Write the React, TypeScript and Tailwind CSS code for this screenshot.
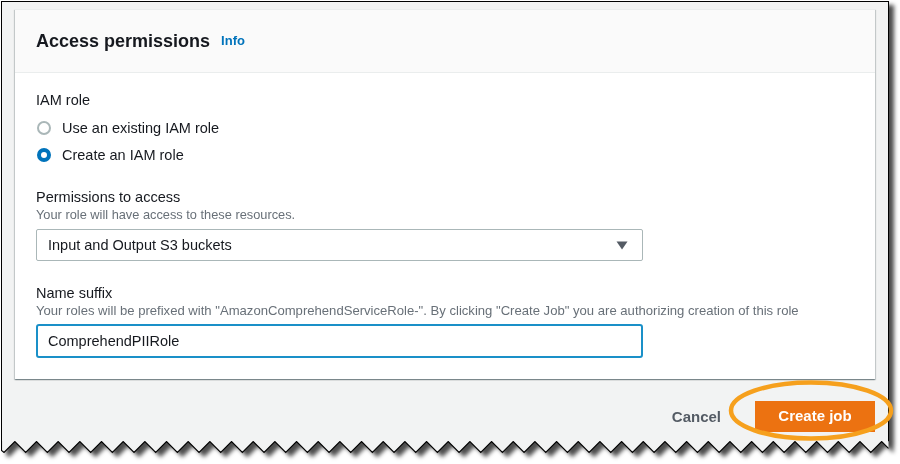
import React from "react";

function Teeth() {
  const W = 888;
  const period = 21.67;
  const half = period / 2;
  const top = 0.5;
  const bottom = 11.5;
  const pts: [number, number][] = [];
  pts.push([0.5, 0]);
  pts.push([0.5, bottom - 2]);
  let x = 3;
  let down = true;
  while (x < W - 0.5) {
    pts.push([x, down ? bottom : top]);
    x += half;
    down = !down;
  }
  const prev = pts[pts.length - 1];
  const frac = (W - 0.5 - prev[0]) / half;
  const yEnd = prev[1] + (down ? bottom - top : top - bottom) * frac;
  pts.push([W - 0.5, yEnd]);
  const line = pts.map((p, i) => `${i === 0 ? "M" : "L"}${p[0].toFixed(2)},${p[1].toFixed(2)}`).join(" ");
  const fill = `${line} L${W - 0.5},0 Z`;
  return (
    <svg width={W} height={13} className="block -mt-px" viewBox={`0 0 ${W} 13`}>
      <path d={fill} fill="#f2f3f3" />
      <path d={line} fill="none" stroke="#000" strokeWidth={1.1} />
    </svg>
  );
}

function Radio({ checked }: { checked?: boolean }) {
  return checked ? (
    <span className="block w-[14px] h-[14px] rounded-full border-[4px] border-[#0073bb] bg-white" />
  ) : (
    <span className="block w-[14px] h-[14px] rounded-full border-2 border-[#aab7b8] bg-white" />
  );
}

export default function App() {
  return (
    <div
      className="relative w-[900px] h-[464px] bg-white overflow-hidden text-[#16191f]"
      style={{ fontFamily: '"Liberation Sans", Arial, sans-serif' }}
    >
      <div className="ml-px mt-px w-[888px] [filter:drop-shadow(5px_4px_2px_rgba(0,0,0,0.7))]">
        <div className="h-[441px] bg-[#f2f3f3] border-l border-t border-r border-black pl-[13px] pt-[7px]">
          {/* Card */}
          <div className="w-[860px] h-[370px] bg-white shadow-[0_1px_1px_0_rgba(0,28,36,0.3),1px_1px_1px_0_rgba(0,28,36,0.15),-1px_1px_1px_0_rgba(0,28,36,0.15)] border-t border-[#eaeded]">
            <div className="h-[63px] bg-[#fafafa] border-b border-[#eaeded] flex items-center pl-[21px]">
              <span className="text-[18px] font-bold leading-[24px]">Access permissions</span>
              <span className="ml-[11px] text-[13px] font-bold text-[#0073bb] leading-[24px]">Info</span>
            </div>
            <div className="pl-[21px] pt-[17px]">
              <div className="text-[14.5px] leading-[20px]">IAM role</div>
              <div className="mt-[4px] h-[27px] flex items-center">
                <span className="ml-px">
                  <Radio />
                </span>
                <span className="ml-[11px] text-[14.5px] leading-[20px]">Use an existing IAM role</span>
              </div>
              <div className="h-[27px] flex items-center">
                <span className="ml-px">
                  <Radio checked />
                </span>
                <span className="ml-[11px] text-[14.5px] leading-[20px]">Create an IAM role</span>
              </div>

              <div className="mt-[19px] text-[14.5px] leading-[20px]">Permissions to access</div>
              <div className="text-[12.8px] leading-[16px] text-[#687078]">
                Your role will have access to these resources.
              </div>
              <div className="mt-[6px] w-[607px] h-[32px] border border-[#aab7b8] rounded-[2px] flex items-center justify-between pl-[11px] pr-[14px]">
                <span className="text-[14.5px] leading-[20px]">Input and Output S3 buckets</span>
                <svg width="12" height="9" viewBox="0 0 12 9">
                  <path d="M0.5 0.5 L11.5 0.5 L6 8.5 Z" fill="#545b64" />
                </svg>
              </div>

              <div className="mt-[22px] text-[14.5px] leading-[20px]">Name suffix</div>
              <div className="text-[13.1px] leading-[16px] text-[#687078]">
                Your roles will be prefixed with "AmazonComprehendServiceRole-". By clicking "Create Job" you are
                authorizing creation of this role
              </div>
              <div className="mt-[5px] w-[607px] h-[34px] border-2 border-[#1a90c8] rounded-[3px] flex items-center pl-[10px]">
                <span className="text-[14.5px] leading-[20px]">ComprehendPIIRole</span>
              </div>
            </div>
          </div>

          {/* Footer */}
          <div className="w-[860px] mt-[22px] h-[31px] flex items-center justify-end">
            <span className="mr-[34px] text-[15px] font-bold text-[#545b64] leading-[20px]">Cancel</span>
            <span className="w-[120px] h-[31px] bg-[#ec7211] flex items-center justify-center text-[15px] font-bold text-white">
              Create job
            </span>
          </div>
        </div>
        <Teeth />
      </div>

      {/* Highlight ellipse */}
      <svg className="absolute left-[728px] top-[380px]" width="168" height="62" viewBox="0 0 168 62">
        <ellipse cx="83" cy="30.5" rx="80" ry="28" fill="none" stroke="#f6a01d" strokeWidth="4.5" />
      </svg>
    </div>
  );
}
